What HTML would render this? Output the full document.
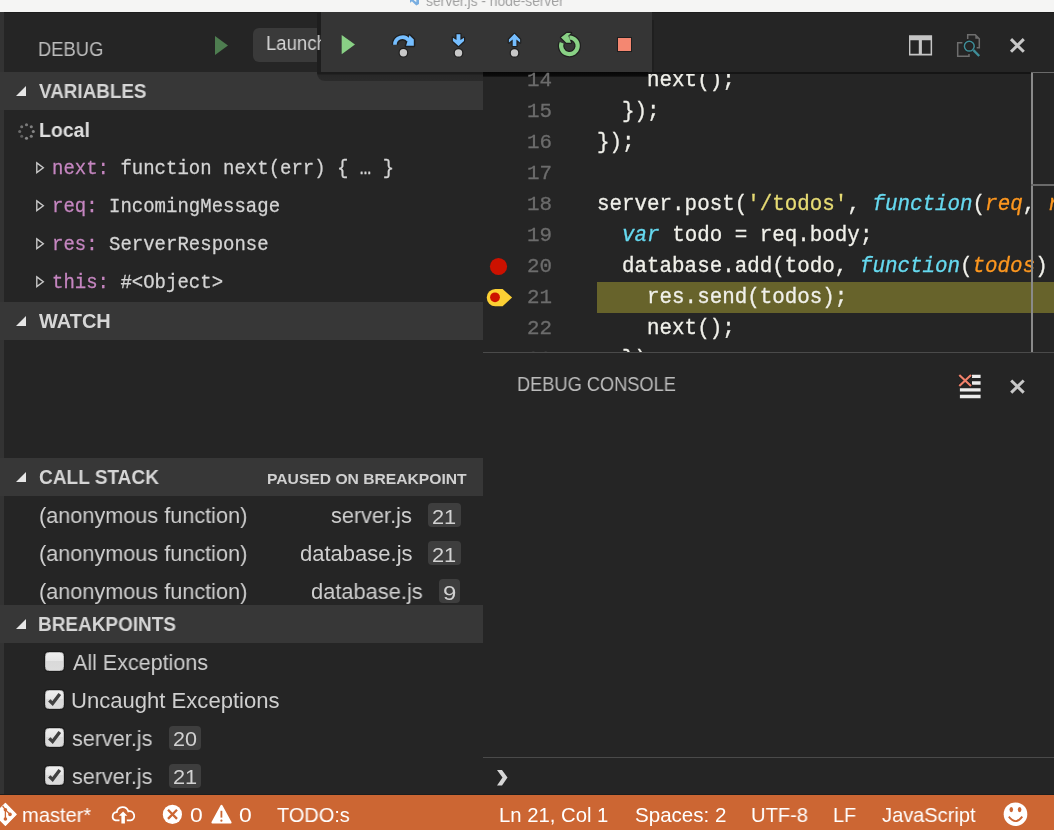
<!DOCTYPE html>
<html><head><meta charset="utf-8">
<style>
*{margin:0;padding:0;box-sizing:border-box}
html,body{width:1054px;height:830px;overflow:hidden;background:#252525}
body{position:relative;font-family:"Liberation Sans",sans-serif}
.a{position:absolute}
.t{position:absolute;white-space:pre;line-height:1;will-change:transform}
.m{font-family:"Liberation Mono",monospace}
.hdr{position:absolute;left:0;width:483px;height:38px;background:#373737}
.tri{position:absolute;left:16px;width:0;height:0;border-left:10px solid transparent;border-bottom:10px solid #e6e6e6}
.badge{position:absolute;height:24px;background:#3e3e3e;border-radius:4px}
.cb{position:absolute;left:45px;width:19px;height:19px;border-radius:3.5px;background:linear-gradient(#efefef 0,#e6e6e6 45%,#d9d9d9 50%,#dcdcdc 100%);border:1.5px solid #bdbdbd;box-shadow:0 0 0 1px #1a1a1a}
.cl{position:absolute;left:0;height:31px;white-space:pre;font-family:"Liberation Mono",monospace;font-size:20.86px;line-height:31px;color:#f0f0ea;will-change:transform;-webkit-text-stroke:0.3px currentColor}
.kw{color:#66d9ef;font-style:italic}
.pa{color:#fd971f;font-style:italic}
.st{color:#e6db74}
.vn{color:#c586c0}
.var{position:absolute;left:52px;white-space:pre;line-height:1;font-family:"Liberation Mono",monospace;font-size:19px;color:#d4d4d4;will-change:transform;-webkit-text-stroke:0.25px currentColor;transform:scaleY(1.07);transform-origin:0 14.56px}
</style></head><body>

<!-- title bar -->
<div class="a" style="left:0;top:0;width:1054px;height:12px;background:#f5f5f4;overflow:hidden">
  <svg class="a" style="left:410px;top:-6px" width="9" height="12" viewBox="0 0 10 12"><path d="M7 0 L10 1.5 V10.5 L7 12 L2 7.5 L0.5 9 L0 8.5 V3.5 L0.5 3 L2 4.5 Z M7 3.5 L4 6 L7 8.5 Z" fill="#79aee0"/></svg>
  <div class="t" style="left:425.58px;top:-5.77px;font-family:'Liberation Sans';font-weight:normal;font-size:14.5px;color:#a0a0a0;transform:scaleX(0.9544);transform-origin:0 12.27px;">server.js - node-server</div>
</div>
<div class="a" style="left:0;top:12px;width:1054px;height:1px;background:#1d1d1d"></div>

<!-- left strip -->
<div class="a" style="left:0;top:12px;width:4px;height:783px;background:#333333"></div>

<!-- DEBUG title -->
<div class="t" style="left:38.43px;top:40.49px;font-family:'Liberation Sans';font-weight:normal;font-size:19.5px;color:#bcbcbc;transform:scaleX(0.9427);transform-origin:0 16.51px;">DEBUG</div>
<svg class="a" style="left:215px;top:36px" width="14" height="20"><path d="M0 0 L13 9.5 L0 19 Z" fill="#4e7d50"/></svg>
<div class="a" style="left:253px;top:28px;width:120px;height:34px;border-radius:6px;background:#3a3a3a"></div>
<div class="a" style="left:317px;top:12px;width:4px;height:60px;background:#1e1e1e"></div>
<div class="t" style="left:265.92px;top:34.29px;font-family:'Liberation Sans';font-weight:normal;font-size:19.5px;color:#d4d4d4;transform:scaleX(0.9493);transform-origin:0 16.51px;">Launch</div>

<!-- editor header icons -->
<svg class="a" style="left:904px;top:30px" width="32" height="32" viewBox="904 30 32 32" fill="#c5c5c5">
 <path d="M909 35.2 H932.1 V55.6 H909 Z M910.4 40.2 V53.7 H918.8 V40.2 Z M921.9 40.2 V53.7 H930.6 V40.2 Z" fill-rule="evenodd"/>
</svg>
<svg class="a" style="left:952px;top:30px" width="32" height="32" viewBox="952 30 32 32">
 <path d="M967.7 38.9 V34.7 H975.3 L979.3 38.7 V47.8 H976.7" fill="none" stroke="#6e6e6e" stroke-width="1.5"/>
 <path d="M975.3 34.7 L979.3 38.7 H975.3 Z" fill="#6e6e6e"/>
 <path d="M962.4 42.8 H957.7 V56.3 H969 V54.1" fill="none" stroke="#6e6e6e" stroke-width="1.5"/>
 <circle cx="969.3" cy="46.2" r="4.9" fill="none" stroke="#1f1f1f" stroke-width="3"/>
 <circle cx="969.3" cy="46.2" r="4.9" fill="none" stroke="#3f8e99" stroke-width="1.5"/>
 <path d="M973.4 50.2 L979.2 56" stroke="#3f8e99" stroke-width="2.4"/>
</svg>
<svg class="a" style="left:1006px;top:34px" width="22" height="22" viewBox="1006 34 22 22"><path d="M1011 39.1 L1023.8 51.8 M1023.8 39.1 L1011 51.8" stroke="#c8c8c8" stroke-width="3"/></svg>

<!-- editor -->
<div class="a" id="editor" style="left:483px;top:72px;width:571px;height:280px;overflow:hidden;background:#252525">
  <div class="a" style="left:0;top:0;width:165px;height:5px;background:linear-gradient(rgba(0,0,0,0.85),rgba(0,0,0,0.7) 70%,rgba(0,0,0,0.3))"></div>
  <div class="a" style="left:114px;top:210px;width:460px;height:31px;background:#67632b"></div>
<div class="cl" style="left:0;top:-7px;width:69.0px;text-align:right;color:#6c6c6c">14</div>
<div class="cl" style="left:114.0px;top:-7px;transform:scaleY(1.08);transform-origin:0 21px">    next();</div>
<div class="cl" style="left:0;top:24px;width:69.0px;text-align:right;color:#6c6c6c">15</div>
<div class="cl" style="left:114.0px;top:24px;transform:scaleY(1.08);transform-origin:0 21px">  });</div>
<div class="cl" style="left:0;top:55px;width:69.0px;text-align:right;color:#6c6c6c">16</div>
<div class="cl" style="left:114.0px;top:55px;transform:scaleY(1.08);transform-origin:0 21px">});</div>
<div class="cl" style="left:0;top:86px;width:69.0px;text-align:right;color:#6c6c6c">17</div>
<div class="cl" style="left:0;top:117px;width:69.0px;text-align:right;color:#6c6c6c">18</div>
<div class="cl" style="left:114.0px;top:117px;transform:scaleY(1.08);transform-origin:0 21px">server.post(<span class="st">'/todos'</span>, <span class="kw">function</span>(<span class="pa">req</span>, <span class="pa">res</span>, <span class="pa">next</span>) {</div>
<div class="cl" style="left:0;top:148px;width:69.0px;text-align:right;color:#6c6c6c">19</div>
<div class="cl" style="left:114.0px;top:148px;transform:scaleY(1.08);transform-origin:0 21px">  <span class="kw">var</span> todo = req.body;</div>
<div class="cl" style="left:0;top:179px;width:69.0px;text-align:right;color:#6c6c6c">20</div>
<div class="cl" style="left:114.0px;top:179px;transform:scaleY(1.08);transform-origin:0 21px">  database.add(todo, <span class="kw">function</span>(<span class="pa">todos</span>) {</div>
<div class="cl" style="left:0;top:210px;width:69.0px;text-align:right;color:#6c6c6c">21</div>
<div class="cl" style="left:114.0px;top:210px;transform:scaleY(1.08);transform-origin:0 21px">    res.send(todos);</div>
<div class="cl" style="left:0;top:241px;width:69.0px;text-align:right;color:#6c6c6c">22</div>
<div class="cl" style="left:114.0px;top:241px;transform:scaleY(1.08);transform-origin:0 21px">    next();</div>
<div class="cl" style="left:0;top:272px;width:69.0px;text-align:right;color:#6c6c6c">23</div>
<div class="cl" style="left:114.0px;top:272px;transform:scaleY(1.08);transform-origin:0 21px">  });</div>
  <svg class="a" style="left:6px;top:185px" width="20" height="20"><circle cx="9.5" cy="9.5" r="8.6" fill="#cc1100"/></svg>
  <svg class="a" style="left:0;top:214px" width="34" height="24" viewBox="0 214 34 24"><path d="M12.3 217 H19.6 L29.1 225.6 L19.6 234.2 H12.3 A8.6 8.6 0 0 1 12.3 217 Z" fill="#fcd034"/><circle cx="12" cy="225.3" r="4.9" fill="#cc1100"/></svg>
  <div class="a" style="left:548.2px;top:0;width:1.4px;height:280px;background:#8a8a8a"></div>
  <div class="a" style="left:548px;top:0;width:30px;height:1px;background:#6a6a6a"></div>
  <div class="a" style="left:548px;top:112px;width:30px;height:2px;background:#6a6a6a"></div>
  <div class="a" style="left:165px;top:0;width:383px;height:1.5px;background:#151515"></div>
</div>

<!-- panel -->
<div class="a" style="left:483px;top:352px;width:571px;height:1px;background:#4a4a4a"></div>
<div class="t" style="left:516.74px;top:375.29px;font-family:'Liberation Sans';font-weight:normal;font-size:19.5px;color:#bcbcbc;transform:scaleX(0.9344);transform-origin:0 16.51px;">DEBUG CONSOLE</div>
<svg class="a" style="left:954px;top:370px" width="30" height="30" viewBox="954 370 30 30"><path d="M972 376.3 H980.6 M972 383 H980.6 M959.9 389.9 H980.6 M959.9 396.5 H980.6" stroke="#ececec" stroke-width="3.3"/><path d="M959.3 375 L971 386 M971 375 L959.3 386" stroke="#1f1f1f" stroke-width="4"/><path d="M959.3 375 L971 386 M971 375 L959.3 386" stroke="#f0806a" stroke-width="2.2"/></svg>
<svg class="a" style="left:1006px;top:375px" width="22" height="22" viewBox="1006 375 22 22"><path d="M1011.2 380.5 L1023.7 392.6 M1023.7 380.5 L1011.2 392.6" stroke="#c8c8c8" stroke-width="3"/></svg>
<div class="a" style="left:483px;top:757px;width:571px;height:1px;background:#4a4a4a"></div>
<svg class="a" style="left:496px;top:769px" width="13" height="18" viewBox="0 0 13 18"><path d="M1 1 H6 L11.5 8.6 L6 16.5 H1 L6.5 8.6 Z" fill="#d6d6d6"/></svg>

<!-- sidebar: VARIABLES -->
<div class="hdr" style="top:72px"></div>
<div class="tri" style="top:85.8px"></div>
<div class="t" style="left:38.71px;top:82.36px;font-family:'Liberation Sans';font-weight:bold;font-size:19.3px;color:#d6d6d6;transform:scaleX(0.9777);transform-origin:0 16.34px;">VARIABLES</div>
<svg class="a" style="left:17px;top:122px" width="20" height="20" viewBox="0 0 20 20">
  <circle cx="9.5" cy="2.7" r="1.55" fill="#7a7a7a"/><circle cx="14.3" cy="4.7" r="1.55" fill="#808080"/><circle cx="16.3" cy="9.5" r="1.55" fill="#858585"/><circle cx="14.3" cy="14.3" r="1.55" fill="#808080"/><circle cx="9.5" cy="16.3" r="1.55" fill="#8a8a8a"/><circle cx="4.7" cy="14.3" r="1.55" fill="#5e5e5e"/><circle cx="2.7" cy="9.5" r="1.55" fill="#6a6a6a"/><circle cx="4.7" cy="4.7" r="1.55" fill="#747474"/>
</svg>
<div class="t" style="left:38.54px;top:119.57px;font-family:'Liberation Sans';font-weight:bold;font-size:20px;color:#dedede;transform:scaleX(0.9737);transform-origin:0 16.93px;">Local</div>

<svg class="a" style="left:34px;top:160.0px" width="12" height="16" viewBox="34 160.5 12 16"><path d="M36.8 163.4 L43.3 168.2 L36.8 173 Z" fill="none" stroke="#c8c8c8" stroke-width="1.4" stroke-linejoin="miter"/></svg>
<div class="var" style="top:159.94px"><span class="vn">next:</span> function next(err) { … }</div>
<svg class="a" style="left:34px;top:198.0px" width="12" height="16" viewBox="34 160.5 12 16"><path d="M36.8 163.4 L43.3 168.2 L36.8 173 Z" fill="none" stroke="#c8c8c8" stroke-width="1.4" stroke-linejoin="miter"/></svg>
<div class="var" style="top:197.94px"><span class="vn">req:</span> IncomingMessage</div>
<svg class="a" style="left:34px;top:236.0px" width="12" height="16" viewBox="34 160.5 12 16"><path d="M36.8 163.4 L43.3 168.2 L36.8 173 Z" fill="none" stroke="#c8c8c8" stroke-width="1.4" stroke-linejoin="miter"/></svg>
<div class="var" style="top:235.94px"><span class="vn">res:</span> ServerResponse</div>
<svg class="a" style="left:34px;top:274.0px" width="12" height="16" viewBox="34 160.5 12 16"><path d="M36.8 163.4 L43.3 168.2 L36.8 173 Z" fill="none" stroke="#c8c8c8" stroke-width="1.4" stroke-linejoin="miter"/></svg>
<div class="var" style="top:273.94px"><span class="vn">this:</span> #&lt;Object&gt;</div>

<!-- WATCH -->
<div class="hdr" style="top:302px"></div>
<div class="tri" style="top:315.8px"></div>
<div class="t" style="left:38.70px;top:311.96px;font-family:'Liberation Sans';font-weight:bold;font-size:19.3px;color:#d6d6d6;transform:scaleX(1.0363);transform-origin:0 16.34px;">WATCH</div>

<!-- CALL STACK -->
<div class="hdr" style="top:458px"></div>
<div class="tri" style="top:471.8px"></div>
<div class="t" style="left:38.64px;top:468.16px;font-family:'Liberation Sans';font-weight:bold;font-size:19.3px;color:#d6d6d6;transform:scaleX(0.9881);transform-origin:0 16.34px;">CALL STACK</div>
<div class="t" style="left:266.80px;top:471.38px;font-family:'Liberation Sans';font-weight:bold;font-size:15.5px;color:#d0d0d0;transform:scaleX(1.0095);transform-origin:0 13.12px;">PAUSED ON BREAKPOINT</div>

<div class="a" style="left:0;top:496px;width:483px;height:109px;overflow:hidden">
  <div class="a" style="left:0;top:-496px;width:483px;height:830px">
  <div class="t" style="left:38.70px;top:504.88px;font-family:'Liberation Sans';font-weight:normal;font-size:22px;color:#cfcfcf;transform:scaleX(0.9848);transform-origin:0 18.62px;">(anonymous function)</div><div class="t" style="left:331.15px;top:504.88px;font-family:'Liberation Sans';font-weight:normal;font-size:22px;color:#cfcfcf;transform:scaleX(0.9861);transform-origin:0 18.62px;">server.js</div>
  <div class="badge" style="left:428px;top:503px;width:33px"></div><div class="t" style="left:432.41px;top:506.65px;font-family:'Liberation Sans';font-weight:normal;font-size:20.5px;color:#d2d2d2;transform:scaleX(1.0625);transform-origin:0 17.35px;">21</div>
  <div class="t" style="left:38.70px;top:542.88px;font-family:'Liberation Sans';font-weight:normal;font-size:22px;color:#cfcfcf;transform:scaleX(0.9848);transform-origin:0 18.62px;">(anonymous function)</div><div class="t" style="left:299.72px;top:542.88px;font-family:'Liberation Sans';font-weight:normal;font-size:22px;color:#cfcfcf;">database.js</div>
  <div class="badge" style="left:428px;top:541px;width:33px"></div><div class="t" style="left:432.41px;top:544.65px;font-family:'Liberation Sans';font-weight:normal;font-size:20.5px;color:#d2d2d2;transform:scaleX(1.0625);transform-origin:0 17.35px;">21</div>
  <div class="t" style="left:38.70px;top:580.88px;font-family:'Liberation Sans';font-weight:normal;font-size:22px;color:#cfcfcf;transform:scaleX(0.9848);transform-origin:0 18.62px;">(anonymous function)</div><div class="t" style="left:311.33px;top:580.88px;font-family:'Liberation Sans';font-weight:normal;font-size:22px;color:#cfcfcf;transform:scaleX(0.9930);transform-origin:0 18.62px;">database.js</div>
  <div class="badge" style="left:439px;top:579px;width:21px"></div><div class="t" style="left:442.80px;top:582.65px;font-family:'Liberation Sans';font-weight:normal;font-size:20.5px;color:#d2d2d2;transform:scaleX(1.1665);transform-origin:0 17.35px;">9</div>
  </div>
</div>

<!-- BREAKPOINTS -->
<div class="hdr" style="top:605px"></div>
<div class="tri" style="top:618.8px"></div>
<div class="t" style="left:38.17px;top:615.16px;font-family:'Liberation Sans';font-weight:bold;font-size:19.3px;color:#d6d6d6;transform:scaleX(0.9828);transform-origin:0 16.34px;">BREAKPOINTS</div>

<div class="cb" style="top:652px"></div>
<div class="t" style="left:72.80px;top:651.78px;font-family:'Liberation Sans';font-weight:normal;font-size:22px;color:#cfcfcf;transform:scaleX(0.9768);transform-origin:0 18.62px;">All Exceptions</div>
<div class="cb" style="top:690px"></div>
<svg class="a" style="left:44px;top:690px" width="20" height="20" viewBox="44 690 20 20"><path d="M49.3 700.3 L52.6 703.6 L59.8 693.9" fill="none" stroke="#404040" stroke-width="3.3"/></svg>
<div class="t" style="left:71.03px;top:689.78px;font-family:'Liberation Sans';font-weight:normal;font-size:22px;color:#cfcfcf;transform:scaleX(1.0031);transform-origin:0 18.62px;">Uncaught Exceptions</div>
<div class="cb" style="top:728px"></div>
<svg class="a" style="left:44px;top:728px" width="20" height="20" viewBox="44 690 20 20"><path d="M49.3 700.3 L52.6 703.6 L59.8 693.9" fill="none" stroke="#404040" stroke-width="3.3"/></svg>
<div class="t" style="left:72.15px;top:727.78px;font-family:'Liberation Sans';font-weight:normal;font-size:22px;color:#cfcfcf;transform:scaleX(0.9811);transform-origin:0 18.62px;">server.js</div>
<div class="badge" style="left:169px;top:726px;width:32px"></div><div class="t" style="left:172.92px;top:729.15px;font-family:'Liberation Sans';font-weight:normal;font-size:20.5px;color:#d2d2d2;transform:scaleX(1.0521);transform-origin:0 17.35px;">20</div>
<div class="cb" style="top:766px"></div>
<svg class="a" style="left:44px;top:766px" width="20" height="20" viewBox="44 690 20 20"><path d="M49.3 700.3 L52.6 703.6 L59.8 693.9" fill="none" stroke="#404040" stroke-width="3.3"/></svg>
<div class="t" style="left:72.15px;top:765.78px;font-family:'Liberation Sans';font-weight:normal;font-size:22px;color:#cfcfcf;transform:scaleX(0.9811);transform-origin:0 18.62px;">server.js</div>
<div class="badge" style="left:169px;top:764px;width:32px"></div><div class="t" style="left:172.91px;top:767.15px;font-family:'Liberation Sans';font-weight:normal;font-size:20.5px;color:#d2d2d2;transform:scaleX(1.0625);transform-origin:0 17.35px;">21</div>

<!-- debug toolbar -->
<div class="a" style="left:652px;top:20px;width:1.5px;height:52px;background:#1f1f1f"></div>
<div class="a" style="left:317px;top:72px;width:166px;height:8.5px;border-radius:0 0 0 8px;background:linear-gradient(#1c1c1c 0,#1c1c1c 2px,#282828 3px,#2a2a2a 8.5px)"></div>
<div class="a" style="left:321px;top:12px;width:331px;height:60px;background:#353535"></div>
<svg class="a" style="left:336px;top:30px" width="24" height="30" viewBox="336 30 24 30"><path d="M341.7 35 L355 44.6 L341.7 54.3 Z" fill="#89d185"/></svg>
<svg class="a" style="left:386px;top:28px" width="34" height="32" viewBox="386 28 34 32">
 <g stroke="#1f1f1f" stroke-width="1.6" stroke-linejoin="round">
  <path d="M394.9 44.8 A7.6 7.6 0 0 1 408.8 40.6" fill="none" stroke-width="6.6"/>
  <path d="M409.4 35.3 L413.8 39.6 L413.8 45.7 L406.1 45.7 Z" fill="#1f1f1f" stroke-width="3"/>
  <circle cx="403.4" cy="52.7" r="4.9" fill="#1f1f1f" stroke="none"/>
 </g>
 <path d="M394.9 44.8 A7.6 7.6 0 0 1 408.8 40.6" fill="none" stroke="#75beff" stroke-width="3.6"/>
 <path d="M409.4 35.3 L413.8 39.6 L413.8 45.7 L406.1 45.7 Z" fill="#75beff"/>
 <circle cx="403.4" cy="52.7" r="3.7" fill="#c8c8c8"/>
</svg>
<svg class="a" style="left:444px;top:28px" width="32" height="32" viewBox="444 28 32 32">
 <path d="M456.5 34.2 H460.4 V40.1 L464 37.8 V41.1 L458.5 46.1 L452.9 41.1 V37.8 L456.5 40.1 Z" fill="#1f1f1f" stroke="#1f1f1f" stroke-width="2.4" stroke-linejoin="round"/>
 <circle cx="458.5" cy="52.9" r="4.9" fill="#1f1f1f"/>
 <path d="M456.5 34.2 H460.4 V40.1 L464 37.8 V41.1 L458.5 46.1 L452.9 41.1 V37.8 L456.5 40.1 Z" fill="#75beff"/>
 <circle cx="458.5" cy="52.9" r="3.7" fill="#c8c8c8"/>
</svg>
<svg class="a" style="left:500px;top:28px" width="32" height="32" viewBox="500 28 32 32">
 <path d="M514.5 33.8 L520.1 39.4 V42.6 L516.4 39.4 V46.1 H512.7 V39.4 L508.9 42.6 V39.4 Z" fill="#1f1f1f" stroke="#1f1f1f" stroke-width="2.4" stroke-linejoin="round"/>
 <circle cx="514.5" cy="52.9" r="4.9" fill="#1f1f1f"/>
 <path d="M514.5 33.8 L520.1 39.4 V42.6 L516.4 39.4 V46.1 H512.7 V39.4 L508.9 42.6 V39.4 Z" fill="#75beff"/>
 <circle cx="514.5" cy="52.9" r="3.7" fill="#c8c8c8"/>
</svg>
<svg class="a" style="left:554px;top:28px" width="32" height="34" viewBox="554 28 32 34">
 <path d="M569.4 37.5 A8.3 8.3 0 1 1 561.7 42.7" fill="none" stroke="#1f1f1f" stroke-width="6.6"/>
 <path d="M561 37.5 L566.7 32.9 L571 32.9 L568.3 35.8 L571 42.7 L566.3 42.7 Z" fill="#1f1f1f" stroke="#1f1f1f" stroke-width="2.4" stroke-linejoin="round"/>
 <path d="M569.4 37.5 A8.3 8.3 0 1 1 561.7 42.7" fill="none" stroke="#89d185" stroke-width="4.2"/>
 <path d="M561 37.5 L566.7 32.9 L571 32.9 L568.3 35.8 L571 42.7 L566.3 42.7 Z" fill="#89d185"/>
</svg>
<div class="a" style="left:616.8px;top:36.7px;width:15.6px;height:15.5px;background:#1f1f1f"></div>
<div class="a" style="left:617.8px;top:37.7px;width:13.6px;height:13.5px;background:#f48771"></div>

<!-- status bar -->
<div class="a" style="left:0;top:794px;width:1054px;height:1px;background:#1e1e1e"></div>
<div class="a" style="left:0;top:795px;width:1054px;height:35px;background:#cc6633"></div>
<svg class="a" style="left:0;top:798px" width="32" height="32" viewBox="0 798 32 32">
 <path d="M5.4 803.4 L16.2 814.4 L5.4 825.4 L-5.4 814.4 Z" fill="#fff" stroke="#fff" stroke-width="1.2" stroke-linejoin="round"/>
 <path d="M2.6 806 L5.4 809.6 V819 M5.4 809.6 L10 814.4" fill="none" stroke="#cc6633" stroke-width="1.3"/>
 <circle cx="5.4" cy="809.8" r="1.8" fill="#cc6633"/><circle cx="5.4" cy="819" r="1.8" fill="#cc6633"/><circle cx="10" cy="814.4" r="1.8" fill="#cc6633"/>
</svg>
<div class="t" style="left:22.49px;top:805.02px;font-family:'Liberation Sans';font-weight:normal;font-size:20.3px;color:#ffffff;transform:scaleX(0.9896);transform-origin:0 17.18px;">master*</div>
<svg class="a" style="left:106px;top:798px" width="34" height="32" viewBox="106 798 34 32">
 <path d="M119.5 820.4 H115.6 A4.2 4.2 0 0 1 116.8 812.2 A5.9 5.9 0 0 1 128.3 811.3 A4.5 4.5 0 0 1 130.7 820.4 H126.8" fill="none" stroke="#fff" stroke-width="1.8"/>
 <path d="M121.4 823.6 V815.8 H118.9 L123.1 811.5 L127.3 815.8 H124.9 V823.6 Z" fill="#fff"/>
</svg>
<svg class="a" style="left:160px;top:802px" width="26" height="26" viewBox="160 802 26 26"><circle cx="172.4" cy="814.4" r="9.6" fill="#fff"/><path d="M168 809.8 L177 818.9 M177 809.8 L168 818.9" stroke="#cc6633" stroke-width="2.3"/></svg>
<div class="t" style="left:189.88px;top:805.22px;font-family:'Liberation Sans';font-weight:normal;font-size:20.3px;color:#ffffff;transform:scaleX(1.1289);transform-origin:0 17.18px;">0</div>
<svg class="a" style="left:209px;top:802px" width="26" height="24" viewBox="209 802 26 24"><path d="M221.5 805.8 L230.6 822.6 H212.4 Z" fill="#fff" stroke="#fff" stroke-width="2" stroke-linejoin="round"/><path d="M221.4 810.8 V817.6" stroke="#cc6633" stroke-width="1.8"/><circle cx="221.4" cy="820.7" r="1.1" fill="#cc6633"/></svg>
<div class="t" style="left:239.08px;top:805.22px;font-family:'Liberation Sans';font-weight:normal;font-size:20.3px;color:#ffffff;transform:scaleX(1.1289);transform-origin:0 17.18px;">0</div>
<div class="t" style="left:277.10px;top:805.22px;font-family:'Liberation Sans';font-weight:normal;font-size:20.3px;color:#ffffff;transform:scaleX(0.9838);transform-origin:0 17.18px;">TODO:s</div>
<div class="t" style="left:498.88px;top:805.22px;font-family:'Liberation Sans';font-weight:normal;font-size:20.3px;color:#ffffff;transform:scaleX(0.9955);transform-origin:0 17.18px;">Ln 21, Col 1</div>
<div class="t" style="left:634.77px;top:805.22px;font-family:'Liberation Sans';font-weight:normal;font-size:20.3px;color:#ffffff;transform:scaleX(1.0135);transform-origin:0 17.18px;">Spaces: 2</div>
<div class="t" style="left:751.19px;top:805.22px;font-family:'Liberation Sans';font-weight:normal;font-size:20.3px;color:#ffffff;transform:scaleX(0.9907);transform-origin:0 17.18px;">UTF-8</div>
<div class="t" style="left:833.02px;top:805.22px;font-family:'Liberation Sans';font-weight:normal;font-size:20.3px;color:#ffffff;transform:scaleX(0.9758);transform-origin:0 17.18px;">LF</div>
<div class="t" style="left:881.50px;top:805.22px;font-family:'Liberation Sans';font-weight:normal;font-size:20.3px;color:#ffffff;transform:scaleX(0.9884);transform-origin:0 17.18px;">JavaScript</div>
<svg class="a" style="left:1000px;top:798px" width="32" height="32" viewBox="1000 798 32 32"><circle cx="1015.5" cy="814.2" r="11.8" fill="#fff"/><ellipse cx="1011.3" cy="809.6" rx="1.8" ry="2.6" fill="#cc6633"/><ellipse cx="1019.6" cy="809.6" rx="1.8" ry="2.6" fill="#cc6633"/><path d="M1008.8 816.6 Q1015.5 825.5 1022.3 816.6" fill="none" stroke="#cc6633" stroke-width="1.8"/></svg>

</body></html>
